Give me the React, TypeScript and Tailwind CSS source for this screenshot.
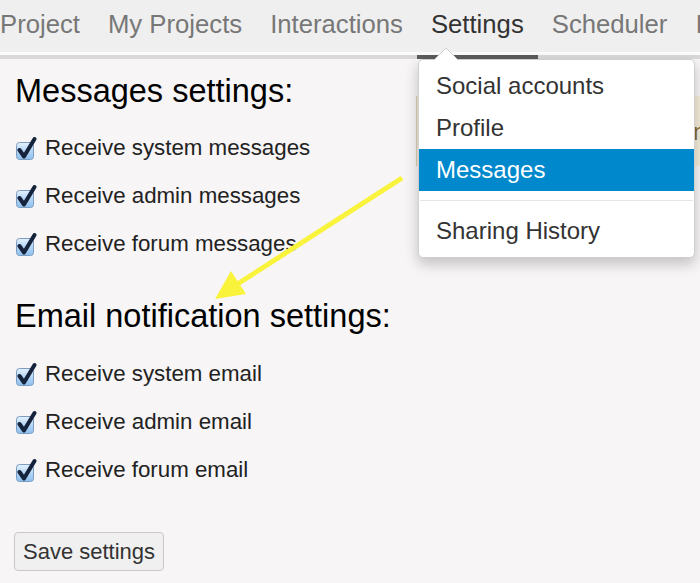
import React from "react";

const font = { fontFamily: '"Liberation Sans", Arial, Helvetica, sans-serif' };

function Check() {
  return (
    <svg width="22" height="24" viewBox="0 0 22 24" className="shrink-0">
      <defs>
        <linearGradient id="cbg" x1="0" y1="0" x2="0" y2="1">
          <stop offset="0" stopColor="#e4f1fd" />
          <stop offset="0.5" stopColor="#b5d6f5" />
          <stop offset="1" stopColor="#8cc0ef" />
        </linearGradient>
      </defs>
      <rect x="1.5" y="6.5" width="17" height="17" rx="3" fill="url(#cbg)" stroke="#7d9cc0" strokeWidth="1" />
      <path d="M4.5 14 L9 20.5 L19.5 3" fill="none" stroke="#15233d" strokeWidth="4" strokeLinecap="round" strokeLinejoin="round" />
    </svg>
  );
}

function Row({ label }: { label: string }) {
  return (
    <div className="flex h-[48px] items-center gap-[8px] text-[22.3px] text-[#222]">
      <Check />
      <span>{label}</span>
    </div>
  );
}

const navItems = ["Project", "My Projects", "Interactions", "Settings", "Scheduler", "Invite"];

export default function App() {
  return (
    <div className="relative h-[583px] w-[700px] overflow-hidden bg-[#f7f5f6]" style={font}>
      {/* nav */}
      <div className="flex w-[700px] overflow-hidden bg-[#efefef]">
        <div className="ml-[-14px] flex">
          {navItems.map((n) => {
            const active = n === "Settings";
            return (
              <div key={n} className="flex flex-col">
                <div
                  className={`flex h-[52px] items-center whitespace-nowrap px-[14px] pb-[4px] text-[25.7px] ${
                    active ? "text-[#333]" : "text-[#777]"
                  }`}
                >
                  {n}
                </div>
                <div className="h-[3px] bg-[#fbfbfb]" />
                <div className={`h-[4px] ${active ? "bg-[#5c5c5c]" : "bg-[#d9d9d9]"}`} />
              </div>
            );
          })}
        </div>
        <div className="flex flex-1 flex-col">
          <div className="h-[52px]" />
          <div className="h-[3px] bg-[#fbfbfb]" />
          <div className="h-[4px] bg-[#d9d9d9]" />
        </div>
      </div>

      {/* content */}
      <div className="flex flex-col pl-[15px] pt-[12px]">
        <div className="flex h-[40px] items-center text-[32.5px] text-black">Messages settings:</div>
        <div className="mt-[13px] flex flex-col">
          <Row label="Receive system messages" />
          <Row label="Receive admin messages" />
          <Row label="Receive forum messages" />
        </div>
        <div className="mt-[28px] flex h-[40px] items-center text-[32.5px] text-black">Email notification settings:</div>
        <div className="mt-[14px] flex flex-col">
          <Row label="Receive system email" />
          <Row label="Receive admin email" />
          <Row label="Receive forum email" />
        </div>
        <div className="mt-[38px] flex">
          <button className="ml-[-1px] flex h-[39px] items-center rounded-[4px] border border-[#c8c8c8] bg-[#f0f0f0] px-[8px] text-[22px] text-[#333]">
            Save settings
          </button>
        </div>
      </div>

      {/* panel behind dropdown */}
      <div className="absolute left-[416px] top-[96px] h-[70px] w-[300px] border-l border-[#d8cfb8] bg-[#f4ecd8]">
        <span className="absolute left-[276px] top-[18px] text-[24px] text-[#8a6a2a]">n</span>
      </div>

      {/* dropdown */}
      <div className="absolute left-[418px] top-[59px] w-[277px] rounded-[5px] border border-[#cfcfcf] bg-white py-[5px] text-[24px] text-[#333] shadow-[0_6px_14px_rgba(0,0,0,0.22)]">
        <div className="flex h-[42px] items-center px-[17px]">Social accounts</div>
        <div className="flex h-[42px] items-center px-[17px]">Profile</div>
        <div className="flex h-[42px] items-center bg-[#0088cc] px-[17px] text-white">Messages</div>
        <div className="mx-[1px] my-[9px] h-[1px] bg-[#e5e5e5]" />
        <div className="flex h-[42px] items-center px-[17px]">Sharing History</div>
      </div>
      <svg className="absolute left-[433px] top-[47px]" width="26" height="14" viewBox="0 0 26 14">
        <polygon points="1,13 13,1 25,13" fill="#fff" />
        <polyline points="1,13 13,1 25,13" fill="none" stroke="#cfcfcf" strokeWidth="1" />
      </svg>

      {/* yellow arrow */}
      <svg className="pointer-events-none absolute left-0 top-0" width="700" height="583">
        <line x1="402" y1="178" x2="236" y2="285" stroke="#f9f33c" strokeWidth="5" />
        <polygon points="215,299 231,271 246,294" fill="#f9f33c" />
      </svg>
    </div>
  );
}
